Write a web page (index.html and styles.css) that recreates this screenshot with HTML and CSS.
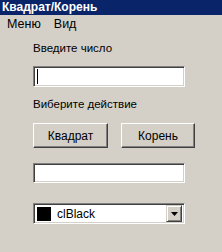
FILE: index.html
```html
<!DOCTYPE html>
<html lang="ru">
<head>
    <meta charset="UTF-8">
    <title>Квадрат/Корень</title>
    <link rel="stylesheet" href="styles.css">
</head>
<body>
    <div class="window">
        <div class="titlebar">Квадрат/Корень</div>
        <div class="menubar">
            <span class="menu-item">Меню</span>
            <span class="menu-item">Вид</span>
        </div>

        <div class="form">
            <div class="label first">Введите число</div>
            <div class="edit"><span class="caret"></span></div>

            <div class="label second">Виберите действие</div>
            <div class="buttons">
                <button class="btn sq">Квадрат</button>
                <button class="btn root">Корень</button>
            </div>

            <div class="edit result"></div>

            <div class="combo">
                <span class="swatch"></span>
                <span class="combo-text">clBlack</span>
                <span class="drop">
                    <svg width="7" height="4" viewBox="0 0 7 4"><polygon points="0,0 7,0 3.5,4" fill="#000"/></svg>
                </span>
            </div>
        </div>
    </div>
</body>
</html>
```

FILE: styles.css
```css
body {
    margin: 0;
    background-color: #d4d0c8;
    font-family: 'Liberation Sans', Arial, sans-serif;
    font-size: 11.5px;
    color: #000;
}

.window {
    width: 222px;
    height: 252px;
    background-color: #d4d0c8;
}

.titlebar {
    height: 15px;
    line-height: 14px;
    padding-left: 2px;
    background-color: #0a246a;
    color: #fff;
    font-weight: bold;
    font-size: 12px;
}

.menubar {
    height: 19px;
    line-height: 19px;
    padding-left: 7px;
    display: flex;
    gap: 13px;
    font-size: 12.5px;
}

.form {
    padding-left: 33px;
    display: flex;
    flex-direction: column;
    align-items: flex-start;
}

.label {
    line-height: 13px;
}

.label.first {
    margin-top: 8px;
}

.label.second {
    margin-top: 11px;
}

.edit {
    box-sizing: border-box;
    width: 152px;
    height: 21px;
    margin-top: 11px;
    background-color: #fff;
    border-top: 1px solid #808080;
    border-left: 1px solid #808080;
    border-right: 1px solid #fff;
    border-bottom: 1px solid #fff;
    box-shadow: inset 1px 1px 0 #404040, inset -1px -1px 0 #d4d0c8;
    padding: 2px 0 0 3px;
}

.caret {
    display: block;
    width: 1px;
    height: 15px;
    background-color: #000;
}

.edit.result {
    height: 20px;
    margin-top: 15px;
}

.buttons {
    display: flex;
    gap: 13px;
    margin-top: 12px;
}

.btn {
    box-sizing: border-box;
    height: 25px;
    padding: 0;
    font-family: inherit;
    font-size: 12px;
    color: #000;
    background-color: #d4d0c8;
    border-top: 1px solid #fff;
    border-left: 1px solid #fff;
    border-right: 1px solid #404040;
    border-bottom: 1px solid #404040;
    box-shadow: inset -1px -1px 0 #808080;
}

.btn.sq {
    width: 75px;
}

.btn.root {
    width: 74px;
}

.combo {
    box-sizing: border-box;
    width: 152px;
    height: 21px;
    margin-top: 20px;
    background-color: #fff;
    border-top: 1px solid #808080;
    border-left: 1px solid #808080;
    border-right: 1px solid #fff;
    border-bottom: 1px solid #fff;
    box-shadow: inset 1px 1px 0 #404040, inset -1px -1px 0 #d4d0c8;
    display: flex;
    align-items: center;
    padding: 2px 2px 2px 3px;
}

.swatch {
    width: 14px;
    height: 14px;
    background-color: #000;
}

.combo-text {
    margin-left: 6px;
    flex: 1;
    font-size: 12px;
}

.drop {
    box-sizing: border-box;
    width: 16px;
    height: 17px;
    background-color: #d4d0c8;
    border-top: 1px solid #d4d0c8;
    border-left: 1px solid #d4d0c8;
    border-right: 1px solid #404040;
    border-bottom: 1px solid #404040;
    box-shadow: inset 1px 1px 0 #fff, inset -1px -1px 0 #808080;
    display: flex;
    align-items: center;
    justify-content: center;
}
```
